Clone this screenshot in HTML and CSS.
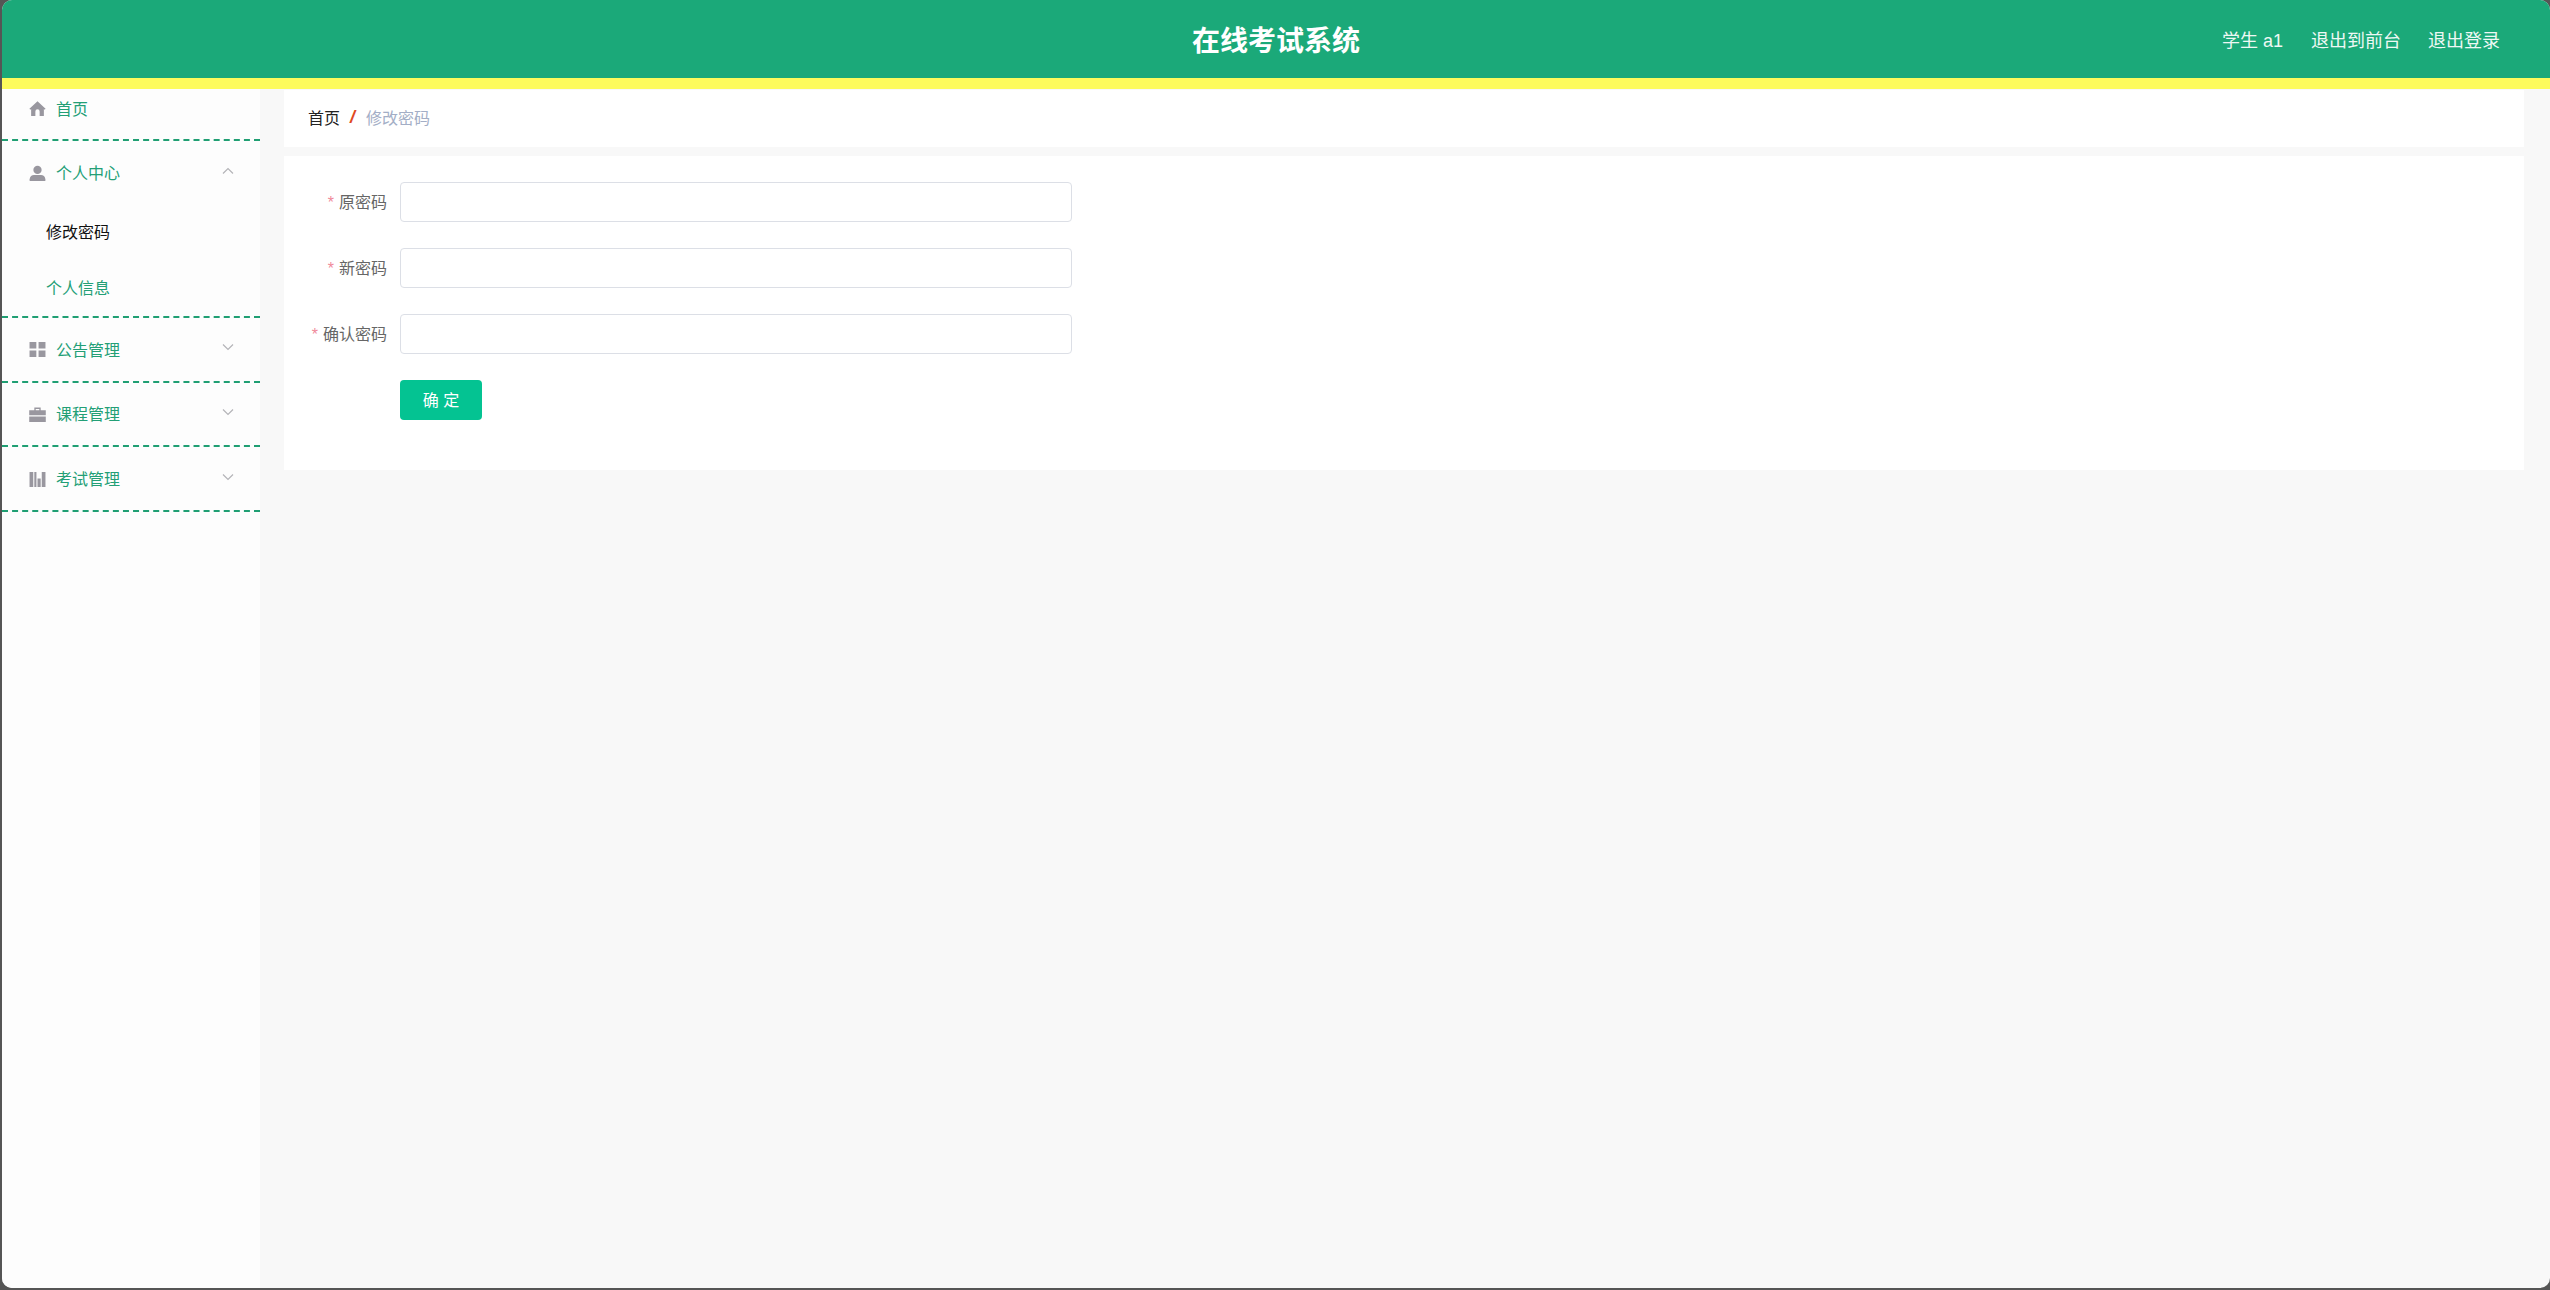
FILE: index.html
```html
<!DOCTYPE html>
<html lang="zh-CN">
<head>
<meta charset="utf-8">
<title>在线考试系统</title>
<link rel="stylesheet" href="styles.css">
</head>
<body>
<div class="app">
  <header class="topbar">
    <div class="brand">在线考试系统</div>
    <nav class="topnav">
      <span class="who">学生 a1</span>
      <a class="front">退出到前台</a>
      <a>退出登录</a>
    </nav>
  </header>
  <div class="body">
    <aside class="sidebar">
      <div class="row row-first">
        <svg class="ico" viewBox="0 0 16 16"><path d="M8 1.2 0.4 8.2l.8.9.8-.7V15h4v-4.2a2 2 0 0 1 4 0V15h4V8.4l.8.7.8-.9z"/></svg>
        <span>首页</span>
      </div>
      <div class="group">
        <div class="row row-open">
          <svg class="ico" viewBox="0 0 16 16"><circle cx="8" cy="4.6" r="3.9"/><path d="M.6 15v-1.6c0-2.6 2.2-4 4-4h6.800c1.800 0 4 1.400 4 4V15z"/></svg>
          <span>个人中心</span>
          <svg class="chev" viewBox="0 0 12 8"><path d="M1 6.500 6 1.500l5 5"/></svg>
        </div>
        <div class="sub sub-active">修改密码</div>
        <div class="sub">个人信息</div>
      </div>
      <div class="row row-line">
        <svg class="ico" viewBox="0 0 16 16"><path d="M.5 1h6.400v6H.5zM9 1h6.500v6H9zM.5 9h6.400v6H.5zM9 9h6.500v6H9z"/></svg>
        <span>公告管理</span>
        <svg class="chev" viewBox="0 0 12 8"><path d="M1 1.500l5 5 5-5"/></svg>
      </div>
      <div class="row row-line">
        <svg class="ico" viewBox="0 0 16 16"><path d="M5 4V1.500h6V4h-1.300V2.800H6.300V4zM.2 4h15.600v4.600H.2zM.2 9.800h15.600V15H.2z"/></svg>
        <span>课程管理</span>
        <svg class="chev" viewBox="0 0 12 8"><path d="M1 1.500l5 5 5-5"/></svg>
      </div>
      <div class="row row-line">
        <svg class="ico" viewBox="0 0 16 16"><path d="M.5 1h3.500v14H.5zM5 1h2v14H5zM8 7h3v8H8zM12 1h3.500v14H12z"/></svg>
        <span>考试管理</span>
        <svg class="chev" viewBox="0 0 12 8"><path d="M1 1.500l5 5 5-5"/></svg>
      </div>
    </aside>
    <main class="content">
      <div class="crumbs">
        <span class="crumb-home">首页</span>
        <span class="crumb-sep">/</span>
        <span class="crumb-cur">修改密码</span>
      </div>
      <form class="card">
        <div class="field">
          <label class="label"><i class="req">*</i>原密码</label>
          <input class="input" type="password">
        </div>
        <div class="field">
          <label class="label"><i class="req">*</i>新密码</label>
          <input class="input" type="password">
        </div>
        <div class="field">
          <label class="label"><i class="req">*</i>确认密码</label>
          <input class="input" type="password">
        </div>
        <div class="field">
          <span class="label"></span>
          <button class="btn" type="button">确 定</button>
        </div>
      </form>
    </main>
  </div>
</div>
</body>
</html>
```
FILE: styles.css
```css
* { box-sizing: border-box; }
html, body { margin: 0; height: 100%; }
body {
  background: #555;
  padding: 0 0 2px 2px;
  height: 1290px;
  overflow: hidden;
  font-family: "Liberation Sans", "Noto Sans CJK SC", sans-serif;
  font-size: 16px;
}
.app {
  height: 100%;
  border-radius: 10px;
  overflow: hidden;
  display: flex;
  flex-direction: column;
  background: #f8f8f8;
}
.topbar {
  flex: none;
  height: 89px;
  background: #1ba979;
  border-bottom: 11px solid #fdfb5c;
  display: grid;
  grid-template-columns: 1fr auto 1fr;
  align-items: center;
  color: #fff;
}
.brand {
  grid-column: 2;
  font-size: 28px;
  font-weight: 700;
}
.topnav {
  grid-column: 3;
  justify-self: end;
  display: flex;
  gap: 27px;
  padding-right: 50px;
  font-size: 18px;
  color: #eef8f4;
}
.who { margin-right: 1px; }
.body { flex: 1; display: flex; min-height: 0; }
.sidebar { flex: none; width: 258px; background: #fdfdfd; }
.row {
  display: flex;
  align-items: center;
  height: 64.67px;
  padding: 0 26px 1px 27px;
  color: #239f76;
  border-bottom: 2px dashed #1f9f73;
}
.row-first { height: 52px; padding-bottom: 13px; }
.row-open { border-bottom: 0; height: 63px; padding-bottom: 1px; }
.group { border-bottom: 2px dashed #1f9f73; }
.ico { width: 17px; height: 17px; fill: #99979f; margin-right: 10px; margin-top: 2px; flex: none; }
.row .chev {
  width: 12px;
  height: 8px;
  margin-left: auto;
  margin-bottom: 3px;
  fill: none;
  stroke: #b4b4b8;
  stroke-width: 1.2;
}
.sub {
  height: 56px;
  padding: 2px 0 0 44px;
  line-height: 54px;
  color: #239f76;
}
.sub-active { color: #111; }
.content {
  flex: 1;
  min-width: 0;
  padding: 1px 26px 0 24px;
  display: flex;
  flex-direction: column;
  gap: 9px;
}
.crumbs {
  height: 57px;
  background: #fff;
  display: flex;
  align-items: center;
  padding: 0 0 4px 24px;
}
.crumb-home { color: #222; }
.crumb-sep {
  margin: 0 11px 0 10px;
  color: #e0491f;
  font-weight: 700;
  font-style: italic;
  font-size: 18px;
  padding-top: 2px;
}
.crumb-cur { color: #a3aec6; }
.card {
  background: #fff;
  height: 314px;
  padding: 26px 0 0;
  display: flex;
  flex-direction: column;
  gap: 26px;
}
.field { display: flex; align-items: center; height: 40px; }
.label {
  width: 103px;
  text-align: right;
  color: #666;
  margin-right: 13px;
  padding-bottom: 3px;
  flex: none;
}
.req {
  color: #f08a9a;
  font-style: normal;
  margin-right: 5px;
}
.input {
  width: 672px;
  height: 40px;
  border: 1px solid #dcdfe6;
  border-radius: 4px;
  background: #fff;
  padding: 0 15px;
  outline: none;
}
.btn {
  width: 82px;
  height: 40px;
  border: 0;
  border-radius: 4px;
  background: #04c392;
  color: #fff;
  font: inherit;
  padding: 0 0 2px;
}
```
